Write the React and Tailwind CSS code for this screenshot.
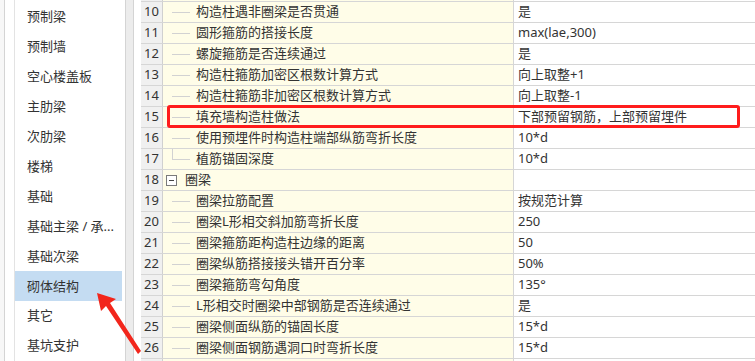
import React from "react";

const sideItems = [
  "预制梁",
  "预制墙",
  "空心楼盖板",
  "主肋梁",
  "次肋梁",
  "楼梯",
  "基础",
  "基础主梁 / 承...",
  "基础次梁",
  "砌体结构",
  "其它",
  "基坑支护",
];

const rows = [
  { n: 10, name: "构造柱遇非圈梁是否贯通", value: "是" },
  { n: 11, name: "圆形箍筋的搭接长度", value: "max(lae,300)" },
  { n: 12, name: "螺旋箍筋是否连续通过", value: "是" },
  { n: 13, name: "构造柱箍筋加密区根数计算方式", value: "向上取整+1" },
  { n: 14, name: "构造柱箍筋非加密区根数计算方式", value: "向上取整-1" },
  { n: 15, name: "填充墙构造柱做法", value: "下部预留钢筋，上部预留埋件" },
  { n: 16, name: "使用预埋件时构造柱端部纵筋弯折长度", value: "10*d" },
  { n: 17, name: "植筋锚固深度", value: "10*d", last: true },
  { n: 18, name: "圈梁", value: "", group: true },
  { n: 19, name: "圈梁拉筋配置", value: "按规范计算" },
  { n: 20, name: "圈梁L形相交斜加筋弯折长度", value: "250" },
  { n: 21, name: "圈梁箍筋距构造柱边缘的距离", value: "50" },
  { n: 22, name: "圈梁纵筋搭接接头错开百分率", value: "50%" },
  { n: 23, name: "圈梁箍筋弯勾角度", value: "135°" },
  { n: 24, name: "L形相交时圈梁中部钢筋是否连续通过", value: "是" },
  { n: 25, name: "圈梁侧面纵筋的锚固长度", value: "15*d" },
  { n: 26, name: "圈梁侧面钢筋遇洞口时弯折长度", value: "15*d" },
];

const Sidebar = () => (
  <div className="flex h-full shrink-0">
    <div className="w-[5px] bg-[#f7f7f7] border-r border-[#d4d4d4]" />
    <div className="w-[120px] bg-white flex">
      <div className="w-[10px] border-r border-[#e3e3e3]" />
      <div className="flex-1 flex flex-col pt-[2px] pr-[3px]">
        {sideItems.map((t) => (
          <div
            key={t}
            className={`h-[30px] flex items-center pl-[12px] text-[13px] text-[#333] whitespace-nowrap ${
              t === "砌体结构" ? "bg-[#c4dcf2]" : ""
            }`}
          >
            {t}
          </div>
        ))}
      </div>
    </div>
    <div className="w-[9px] bg-[#ececec] border-l border-r border-[#d4d4d4]" />
  </div>
);

const Row = ({ r }) => (
  <div className="flex h-[21px] border-b border-[#d6d6d6]">
    <div className="w-[22px] shrink-0 bg-[#f0f0f0] border-r border-[#d0d0d0] flex items-center justify-center text-[13px] text-[#333]">
      {r.n}
    </div>
    <div className="w-[351px] shrink-0 bg-[#fffde8] border-r border-[#d6d6d6] flex items-center relative">
      {r.group ? (
        <>
          <div className="ml-[3px] w-[11px] h-[11px] border border-[#7a7a7a] bg-white flex items-center justify-center">
            <div className="w-[5px] h-px bg-[#444]" />
          </div>
          <span className="ml-[8px] text-[13px] text-[#333]">{r.name}</span>
        </>
      ) : (
        <>
          <div className="ml-[9px] w-[18px] h-px bg-[#d2d2d2]" />
          {r.last && (
            <div className="absolute left-[9px] top-0 h-[11px] w-px bg-[#d2d2d2]" />
          )}
          <span className="ml-[6px] text-[13px] text-[#333] whitespace-nowrap">{r.name}</span>
        </>
      )}
    </div>
    <div className="flex-1 bg-white flex items-center pl-[4px] text-[13px] text-[#333] whitespace-nowrap">
      {r.value}
    </div>
  </div>
);

const Table = () => (
  <div className="flex-1 flex bg-white overflow-hidden">
    <div className="w-[7px] shrink-0" />
    <div className="flex-1 flex flex-col">
      <div className="flex h-[2px] border-b border-[#d6d6d6]">
        <div className="w-[22px] bg-[#f0f0f0] border-r border-[#d0d0d0]" />
        <div className="w-[351px] bg-[#fffde8] border-r border-[#d6d6d6]" />
        <div className="flex-1" />
      </div>
      {rows.map((r) => (
        <Row key={r.n} r={r} />
      ))}
      <div className="flex flex-1">
        <div className="w-[22px] bg-[#f0f0f0] border-r border-[#d0d0d0]" />
        <div className="w-[351px] bg-[#fffde8] border-r border-[#d6d6d6]" />
        <div className="flex-1" />
      </div>
    </div>
  </div>
);

export default function App() {
  return (
    <div
      className="relative w-[755px] h-[361px] overflow-hidden flex bg-white"
      style={{ fontFamily: '"Noto Sans", "Noto Sans CJK SC", sans-serif' }}
    >
      <Sidebar />
      <Table />

      {/* annotation: red box round row 15 */}
      <div className="absolute left-[167px] top-[105px] w-[573px] h-[23px] border-[3px] border-[#ff1c1c] rounded-[3px]" />

      {/* annotation: red arrow */}
      <svg className="absolute left-0 top-0" width="755" height="361">
        <polygon
          points="97,293 101,311 106,306 138,354 141,351 110,303 116,299"
          fill="#f2261c"
        />
      </svg>
    </div>
  );
}
